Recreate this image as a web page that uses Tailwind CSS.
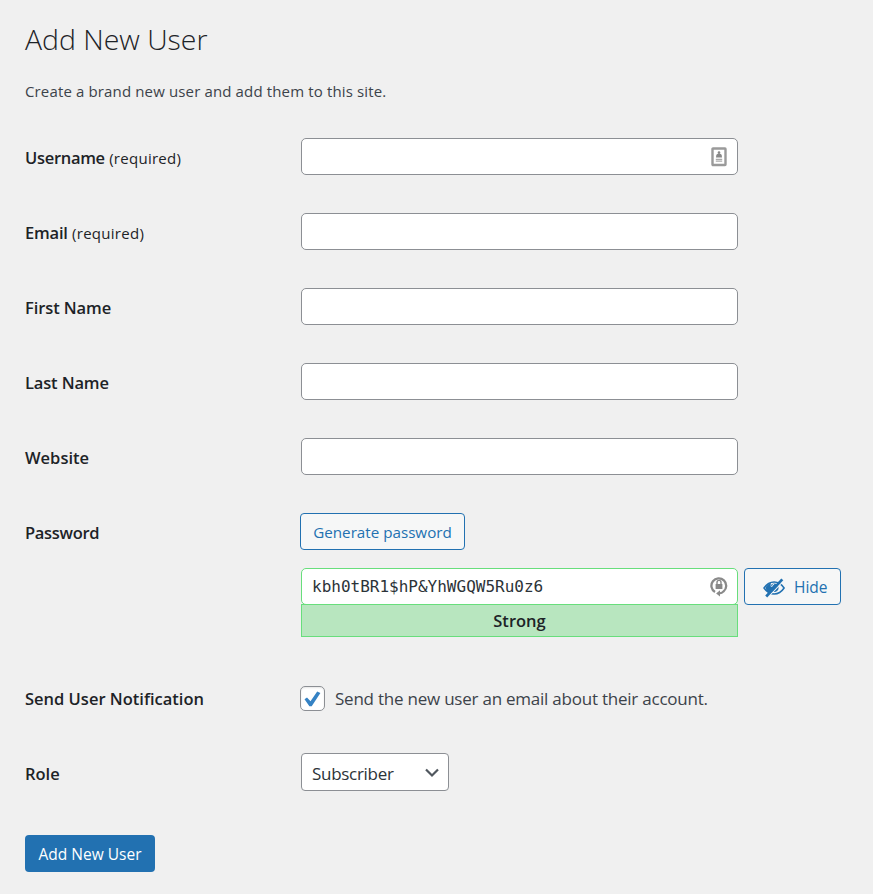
<!DOCTYPE html>
<html lang="en">
<head>
<meta charset="utf-8">
<title>Add New User</title>
<script src="https://cdn.jsdelivr.net/npm/@tailwindcss/browser@4"></script>
</head>
<body class="bg-[#f0f0f0] text-[#3c434a] font-['Open_Sans','Noto_Sans',sans-serif]">
<main class="flex h-[894px] w-[873px] flex-col overflow-hidden pl-[25px] pt-[19px]">
  <h1 class="h-10 whitespace-nowrap text-[28.4px] font-[330] leading-10 text-[#1d2327]"><span>Add New User</span></h1>
  <p class="mt-5 h-6 whitespace-nowrap text-[15px] leading-6 tracking-[0.14px]"><span>Create a brand new user and add them to this site.</span></p>
  <form class="mt-[35px] flex flex-col gap-[38px]">
    <div class="flex h-[37px] items-center">
      <label class="w-[276px] whitespace-nowrap pt-[3px] text-[16.5px] font-[550] text-[#1d2327]"><span class="tracking-[-0.3px]">Username</span> <span class="text-[15px] font-normal tracking-[0.28px]">(required)</span></label>
      <div class="flex h-[37px] w-[437px] items-center justify-end rounded-[5px] border border-[#8c8f94] bg-white pr-[10px]">
        <svg class="h-5 w-4" viewBox="0 0 16 20" fill="none"><rect x="1.5" y="1.5" width="13" height="16.5" rx=".5" stroke="#9a9a9a" stroke-width="2.4"/><circle cx="8" cy="5.6" r="1.3" fill="#888"/><path d="M5 10.5c0-3 1.2-3.9 3-3.9s3 .9 3 3.9z" fill="#888"/><path d="M4.8 12.4h6.4M4.8 14.2h6.4" stroke="#aaa" stroke-width="1.2"/></svg>
      </div>
    </div>
    <div class="flex h-[37px] items-center">
      <label class="w-[276px] whitespace-nowrap pt-[3px] text-[16.5px] font-[550] text-[#1d2327]"><span class="tracking-[-0.2px]">Email</span> <span class="text-[15px] font-normal tracking-[0.28px]">(required)</span></label>
      <div class="h-[37px] w-[437px] rounded-[5px] border border-[#8c8f94] bg-white"></div>
    </div>
    <div class="flex h-[37px] items-center">
      <label class="w-[276px] whitespace-nowrap pt-[3px] text-[16.5px] font-[550] tracking-[-0.1px] text-[#1d2327]"><span>First Name</span></label>
      <div class="h-[37px] w-[437px] rounded-[5px] border border-[#8c8f94] bg-white"></div>
    </div>
    <div class="flex h-[37px] items-center">
      <label class="w-[276px] whitespace-nowrap pt-[3px] text-[16.5px] font-[550] tracking-[-0.15px] text-[#1d2327]"><span>Last Name</span></label>
      <div class="h-[37px] w-[437px] rounded-[5px] border border-[#8c8f94] bg-white"></div>
    </div>
    <div class="flex h-[37px] items-center">
      <label class="w-[276px] whitespace-nowrap pt-[3px] text-[16.5px] font-[550] text-[#1d2327]"><span>Website</span></label>
      <div class="h-[37px] w-[437px] rounded-[5px] border border-[#8c8f94] bg-white"></div>
    </div>
    <div class="flex h-[124px] items-start">
      <label class="flex h-[37px] w-[275px] items-center whitespace-nowrap pt-[3px] text-[16.5px] font-[550] tracking-[-0.3px] text-[#1d2327]"><span>Password</span></label>
      <div>
        <button type="button" class="flex h-[37px] w-[165px] items-center justify-center whitespace-nowrap rounded-[4px] border border-[#2271b1] bg-[#f6f7f7] pt-px text-[15.2px] text-[#2271b1]"><span>Generate password</span></button>
        <div class="ml-px mt-[18px] flex items-start gap-[6px]">
          <div class="w-[437px]">
            <div class="flex h-[37px] items-center justify-between rounded-[5px] border border-[#68de7c] bg-white pl-[10px] pr-[9px]">
              <span class="font-['DejaVu_Sans_Mono',monospace] text-[16px] leading-none text-[#2c3338]">kbh0tBR1$hP&amp;YhWGQW5Ru0z6</span>
              <svg class="-mt-px h-[22px] w-[18px]" viewBox="0 0 18 22" fill="none"><path d="M5 17.1A7.4 7.4 0 1 1 13.6 16.4Q12 18.4 9 18.4" stroke="#8a8a8a" stroke-width="2.3"/><path d="M10 15.2v6.4L6.1 18.4z" fill="#8a8a8a"/><rect x="5.6" y="9" width="6.8" height="5" fill="#888"/><path d="M7 9V7.4a2 2 0 0 1 4 0V9" stroke="#888" stroke-width="1.4"/></svg>
            </div>
            <div class="-mt-px flex h-[33px] items-center justify-center border border-[#68de7c] bg-[#b8e6bf] pt-px text-[16.5px] font-[570] text-[#1d2327]"><span>Strong</span></div>
          </div>
          <button type="button" class="flex h-[37px] w-[97px] items-center gap-[9px] rounded-[4px] border border-[#2271b1] bg-[#f6f7f7] pl-[18px] text-[15.5px] text-[#2271b1]">
            <svg class="mt-[2px] h-5 w-[22px] shrink-0" viewBox="0 0 22 20" fill="none"><path d="M1 10C4 5.7 7.3 4 11.1 4c3.9 0 7.2 1.8 10 6-2.8 4.2-6.1 6-10 6C7.3 16 4 14.3 1 10z" stroke="#2271b1" stroke-width="1.5"/><path d="M2.5 9.4C4 7.1 6 5.5 8 5L7.4 8.2 9 13.5 6.5 15C4.7 14 3 12.2 2.5 9.4z" fill="#2271b1"/><circle cx="11.3" cy="9.7" r="4.3" fill="#2271b1"/><path d="M8.6 9a3 3 0 0 1 2.6-2.7" stroke="#f6f7f7" stroke-width="1"/><path d="M5 19 21 2.4" stroke="#f6f7f7" stroke-width="1.2"/><path d="M3.2 18.5 19.3 1.4" stroke="#2271b1" stroke-width="2.7"/></svg>
            <span class="mt-[3px]">Hide</span>
          </button>
        </div>
      </div>
    </div>
    <div class="mt-[5px] flex h-[37px] items-center">
      <label class="w-[275px] whitespace-nowrap pt-px text-[16.5px] font-[550] text-[#1d2327]"><span>Send User Notification</span></label>
      <div class="flex items-center gap-[10px]">
        <div class="flex h-[25px] w-[25px] items-center justify-center rounded-[5px] border border-[#8c8f94] bg-white shadow-[inset_0_1px_2px_rgba(0,0,0,0.1)]">
          <svg class="h-4 w-[17px]" viewBox="0 0 17 16"><path d="M0.5 8.2 3 6.4 6.5 10.3 13.2.6l3.2 1.3L7.7 15.3H5.4z" fill="#3582c4"/></svg>
        </div>
        <span class="whitespace-nowrap text-[17px] tracking-[-0.23px]">Send the new user an email about their account.</span>
      </div>
    </div>
    <div class="-mt-[2px] flex h-[38px] items-center">
      <label class="w-[276px] whitespace-nowrap pt-[4px] text-[16.5px] font-[550] text-[#1d2327]"><span>Role</span></label>
      <div class="flex h-[38px] w-[148px] items-center justify-between rounded-[4px] border border-[#8c8f94] bg-white pl-[10px] pr-[8px] pt-px text-[17px] tracking-[-0.3px] text-[#2c3338]">
        <span class="mt-[3px]">Subscriber</span>
        <svg class="h-4 w-4" viewBox="0 0 16 16" fill="none"><path d="m2 4.5 6 6 6-6" stroke="#50575e" stroke-width="2.2"/></svg>
      </div>
    </div>
    <button type="button" class="mt-[6px] flex h-[37px] w-[130px] items-center justify-center whitespace-nowrap rounded-[4px] bg-[#2271b1] pt-[2px] text-[15.5px] text-white"><span>Add New User</span></button>
  </form>
</main>
</body>
</html>
